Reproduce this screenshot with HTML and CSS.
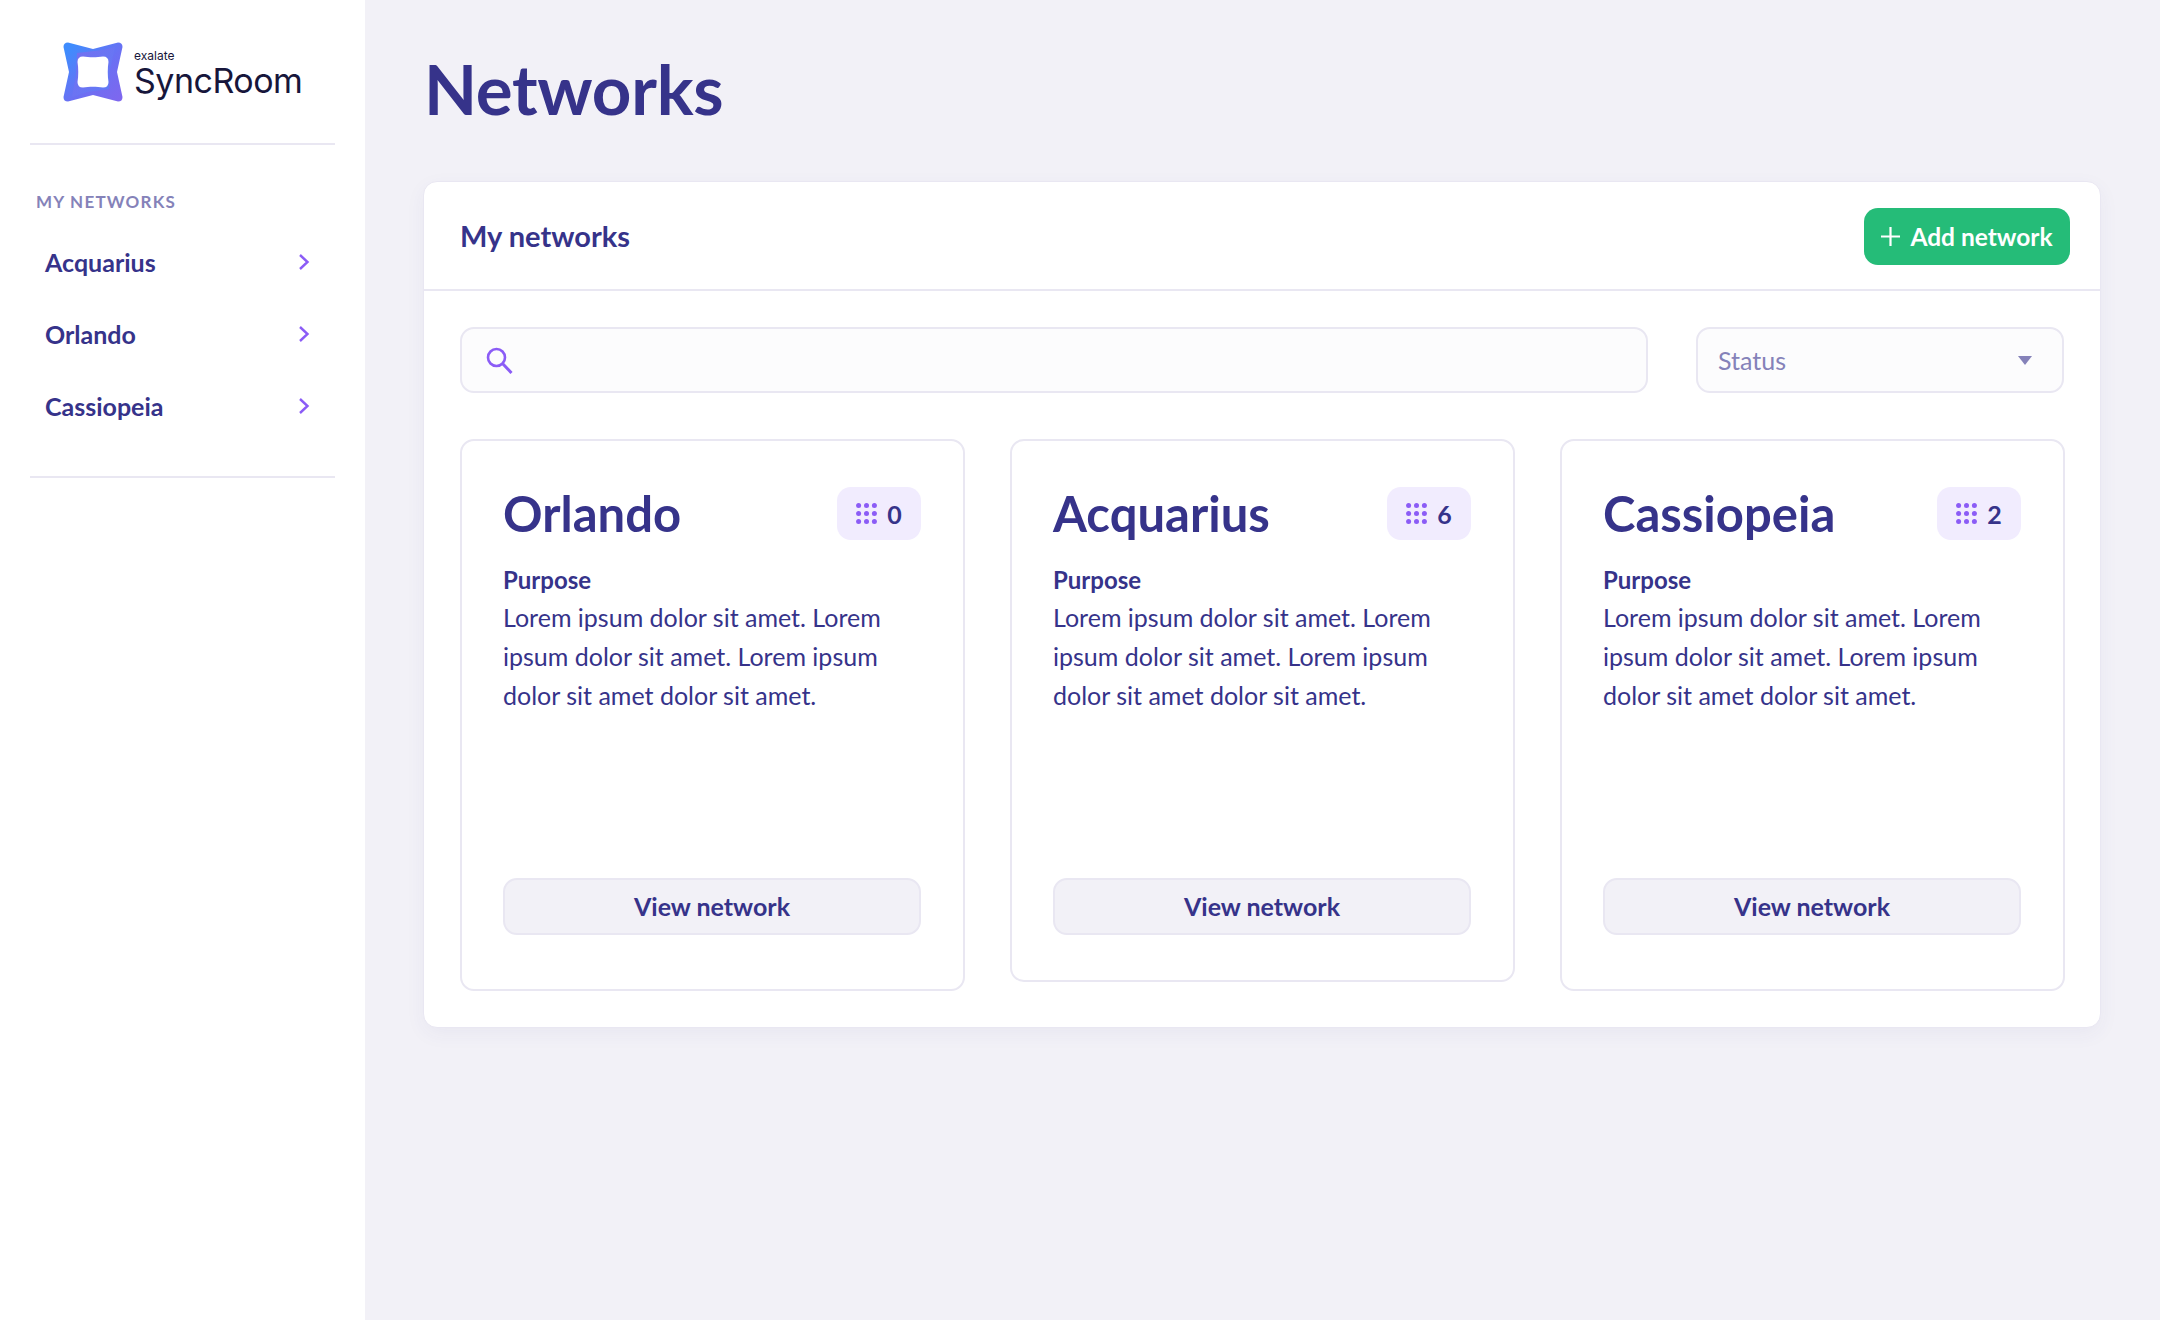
FILE: index.html
```html
<!DOCTYPE html>
<html lang="en">
<head>
	<meta charset="UTF-8">
	<title>Networks</title>
	<link rel="stylesheet" href="styles.css">
</head>
<body>
	<aside class="sidebar">
		<div class="brand">
			<svg class="brand-mark" width="60" height="60" viewBox="0 0 60 60">
				<defs>
					<linearGradient id="markGrad" x1="0" y1="0" x2="1" y2="1">
						<stop offset="0.1" stop-color="#3f8cfd"/>
						<stop offset="0.55" stop-color="#6a70f3"/>
						<stop offset="1" stop-color="#8066ee"/>
					</linearGradient>
					<linearGradient id="ringGrad" x1="0" y1="0" x2="1" y2="1">
						<stop offset="0" stop-color="#8a64ea"/>
						<stop offset="1" stop-color="#4f86fb"/>
					</linearGradient>
				</defs>
				<path d="M5 .5 L30 7 L55 .5 Q59.5 .5 59.5 5 L54 30 L59.5 55 Q59.5 59.5 55 59.5 L30 53 L5 59.5 Q.5 59.5 .5 55 L6 30 L.5 5 Q.5 .5 5 .5 Z" fill="url(#markGrad)"/>
				<path d="M14 11 L40 8 L52 5 L47 27 L46 47 L24 50 L9 55 L13 34 Z" fill="url(#ringGrad)" opacity="0.7"/>
				<path d="M20 14.500 C26 15.500 34 15.500 40 14.500 Q45.500 14.500 45.500 20 C44.500 26 44.500 34 45.500 40 Q45.500 45.500 40 45.500 C34 44.500 26 44.500 20 45.500 Q14.500 45.500 14.500 40 C15.500 34 15.500 26 14.500 20 Q14.500 14.500 20 14.500 Z" fill="#fff"/>
			</svg>
			<div class="brand-text">
				<span class="brand-small">exalate</span>
				<span class="brand-name">SyncRoom</span>
			</div>
		</div>
		<hr class="side-rule">
		<div class="side-label">MY NETWORKS</div>
		<nav class="side-nav">
			<a class="side-link">Acquarius
				<svg width="12" height="18" viewBox="0 0 12 18"><path d="M2 2l7.5 7-7.5 7" fill="none" stroke="#8b5cf6" stroke-width="2.4"/></svg>
			</a>
			<a class="side-link">Orlando
				<svg width="12" height="18" viewBox="0 0 12 18"><path d="M2 2l7.5 7-7.5 7" fill="none" stroke="#8b5cf6" stroke-width="2.4"/></svg>
			</a>
			<a class="side-link">Cassiopeia
				<svg width="12" height="18" viewBox="0 0 12 18"><path d="M2 2l7.5 7-7.5 7" fill="none" stroke="#8b5cf6" stroke-width="2.4"/></svg>
			</a>
		</nav>
		<hr class="side-rule">
	</aside>

	<main class="main">
		<h1 class="page-title">Networks</h1>
		<section class="panel">
			<header class="panel-head">
				<h2>My networks</h2>
				<button class="add-btn">
					<svg width="19" height="19" viewBox="0 0 19 19"><path d="M9.5 0v19M0 9.5h19" stroke="#fff" stroke-width="2.2"/></svg>
					Add network
				</button>
			</header>
			<div class="panel-body">
				<div class="filters">
					<div class="search">
						<svg width="27" height="27" viewBox="0 0 27 27"><circle cx="10.5" cy="10.5" r="8.5" fill="none" stroke="#8b5cf6" stroke-width="2.6"/><path d="M16.5 16.5l9 9.5" stroke="#8b5cf6" stroke-width="3"/></svg>
					</div>
					<div class="status">
						Status
						<span class="caret"></span>
					</div>
				</div>
				<div class="cards">
					<article class="card">
						<div class="card-top">
							<h3>Orlando</h3>
							<div class="badge">
								<svg width="21" height="21" viewBox="0 0 21 21" fill="#8b5cf6"><circle cx="2.6" cy="2.6" r="2.5"/><circle cx="10.5" cy="2.6" r="2.5"/><circle cx="18.4" cy="2.6" r="2.5"/><circle cx="2.6" cy="10.5" r="2.5"/><circle cx="10.5" cy="10.5" r="2.5"/><circle cx="18.4" cy="10.5" r="2.5"/><circle cx="2.6" cy="18.4" r="2.5"/><circle cx="10.5" cy="18.4" r="2.5"/><circle cx="18.4" cy="18.4" r="2.5"/></svg>
								0
							</div>
						</div>
						<h4>Purpose</h4>
						<p>Lorem ipsum dolor sit amet. Lorem ipsum dolor sit amet. Lorem ipsum dolor sit amet dolor sit amet.</p>
						<button class="view-btn">View network</button>
					</article>
					<article class="card card-short">
						<div class="card-top">
							<h3>Acquarius</h3>
							<div class="badge">
								<svg width="21" height="21" viewBox="0 0 21 21" fill="#8b5cf6"><circle cx="2.6" cy="2.6" r="2.5"/><circle cx="10.5" cy="2.6" r="2.5"/><circle cx="18.4" cy="2.6" r="2.5"/><circle cx="2.6" cy="10.5" r="2.5"/><circle cx="10.5" cy="10.5" r="2.5"/><circle cx="18.4" cy="10.5" r="2.5"/><circle cx="2.6" cy="18.4" r="2.5"/><circle cx="10.5" cy="18.4" r="2.5"/><circle cx="18.4" cy="18.4" r="2.5"/></svg>
								6
							</div>
						</div>
						<h4>Purpose</h4>
						<p>Lorem ipsum dolor sit amet. Lorem ipsum dolor sit amet. Lorem ipsum dolor sit amet dolor sit amet.</p>
						<button class="view-btn">View network</button>
					</article>
					<article class="card">
						<div class="card-top">
							<h3>Cassiopeia</h3>
							<div class="badge">
								<svg width="21" height="21" viewBox="0 0 21 21" fill="#8b5cf6"><circle cx="2.6" cy="2.6" r="2.5"/><circle cx="10.5" cy="2.6" r="2.5"/><circle cx="18.4" cy="2.6" r="2.5"/><circle cx="2.6" cy="10.5" r="2.5"/><circle cx="10.5" cy="10.5" r="2.5"/><circle cx="18.4" cy="10.5" r="2.5"/><circle cx="2.6" cy="18.4" r="2.5"/><circle cx="10.5" cy="18.4" r="2.5"/><circle cx="18.4" cy="18.4" r="2.5"/></svg>
								2
							</div>
						</div>
						<h4>Purpose</h4>
						<p>Lorem ipsum dolor sit amet. Lorem ipsum dolor sit amet. Lorem ipsum dolor sit amet dolor sit amet.</p>
						<button class="view-btn">View network</button>
					</article>
				</div>
			</div>
		</section>
	</main>
</body>
</html>
```

FILE: styles.css
```css
:root{
	--ink:#36338a;
	--muted:#8582b9;
	--line:#e9e7f2;
	--purple:#8b5cf6;
	--page:#f2f1f7;
}
*{box-sizing:border-box;}
html,body{height:100%;}
body{
	margin:0;
	display:flex;
	min-height:1320px;
	background:var(--page);
	color:var(--ink);
	font-family:"Lato","Noto Sans",sans-serif;
}
h1,h2,h3,h4,p{margin:0;}

/* sidebar */
.sidebar{
	width:365px;
	flex:none;
	background:#fff;
	padding:0 30px;
}
.brand{
	height:143px;
	padding:42px 0 0 33px;
	display:flex;
	align-items:flex-start;
	gap:11px;
}
.brand-mark{flex:none;}
.brand-text{display:flex;flex-direction:column;color:#17163b;font-family:"Inter",sans-serif;}
.brand-small{font-size:12px;line-height:14px;margin-top:7px;}
.brand-name{font-size:34px;line-height:35px;letter-spacing:-0.5px;}
.side-rule{
	border:0;
	height:2px;
	background:var(--line);
	margin:0;
}
.side-label{
	margin:47px 0 0 6px;
	font-size:17px;
	line-height:20px;
	font-weight:700;
	letter-spacing:1.2px;
	color:var(--muted);
}
.side-nav{padding:14px 0 34px;}
.side-link{
	height:72px;
	display:flex;
	align-items:center;
	justify-content:space-between;
	padding:0 25px 0 15px;
	font-size:25px;
	font-weight:700;
}

/* main */
.main{
	flex:1;
	padding:46px 59px 0 58px;
}
.page-title{
	font-size:69px;
	line-height:86px;
	font-weight:700;
	letter-spacing:-0.3px;
	margin-left:1px;
}
.panel{
	margin-top:49px;
	background:#fff;
	border:1px solid var(--line);
	border-radius:14px;
	box-shadow:0 6px 20px rgba(60,55,130,.05);
}
.panel-head{
	height:109px;
	display:flex;
	align-items:center;
	justify-content:space-between;
	padding:0 30px 0 36px;
	border-bottom:2px solid var(--line);
}
.panel-head h2{font-size:29px;font-weight:700;}
.add-btn{
	height:57px;
	width:206px;
	margin-top:2px;
	display:flex;
	align-items:center;
	justify-content:center;
	gap:10px;
	border:0;
	border-radius:14px;
	background:#25bc78;
	color:#fff;
	font:700 24.5px "Lato","Noto Sans",sans-serif;
}
.panel-body{padding:36px 35px 36px 36px;}
.filters{
	display:flex;
	justify-content:space-between;
	padding-right:1px;
}
.search,.status{
	height:66px;
	background:#fcfcfd;
	border:2px solid var(--line);
	border-radius:14px;
	display:flex;
	align-items:center;
}
.search{width:1188px;padding-left:24px;}
.status{
	width:368px;
	padding:0 30px 0 20px;
	justify-content:space-between;
	font-size:25px;
	color:var(--muted);
}
.caret{
	width:0;
	height:0;
	border-left:7.5px solid transparent;
	border-right:7.5px solid transparent;
	border-top:9px solid var(--muted);
}
.cards{
	margin-top:46px;
	display:grid;
	grid-template-columns:repeat(3,505px);
	justify-content:space-between;
	align-items:start;
}
.card{
	border:2px solid var(--line);
	border-radius:14px;
	padding:46px 42px 54px 41px;
}
.card-short{padding-bottom:45px;}
.card-top{
	display:flex;
	align-items:center;
	justify-content:space-between;
}
.card-top h3{font-size:49px;line-height:53px;font-weight:700;}
.badge{
	height:53px;
	width:84px;
	display:flex;
	align-items:center;
	justify-content:center;
	gap:10px;
	background:#f1ecfe;
	border-radius:14px;
	font-size:25px;
	font-weight:700;
}
.card h4{
	margin-top:21px;
	font-size:24px;
	line-height:37px;
	font-weight:700;
}
.card p{
	height:280px;
	font-size:25px;
	line-height:39px;
}
.view-btn{
	display:block;
	width:100%;
	height:57px;
	padding-bottom:3px;
	background:var(--page);
	border:2px solid var(--line);
	border-radius:14px;
	color:var(--ink);
	font:700 25px "Lato","Noto Sans",sans-serif;
}
```
